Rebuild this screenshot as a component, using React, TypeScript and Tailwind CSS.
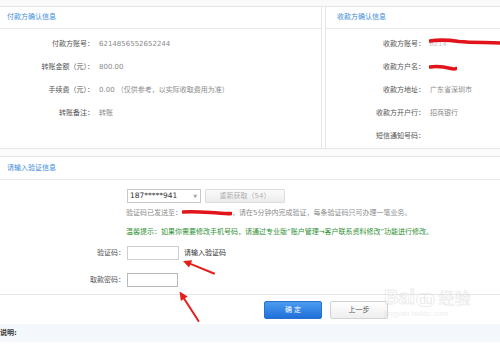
interface InfoRowProps {
  label: string;
  children?: React.ReactNode;
  labelClass: string;
}

const InfoRow = ({ label, children, labelClass }: InfoRowProps) => (
  <div className="flex h-[23px] items-center">
    <span className={`${labelClass} shrink-0 text-right text-[#555]`}>{label}</span>
    <span className="flex items-center text-[#8a8a8a]">{children}</span>
  </div>
);

const Scribble = ({ w, d }: { w: number; d: string }) => (
  <svg width={w} height="8" viewBox={`0 0 ${w} 8`} className="block">
    <path d={d} stroke="#e0141a" strokeWidth="3.6" fill="none" strokeLinecap="round" strokeLinejoin="round" />
  </svg>
);

const Arrows = () => (
  <svg className="pointer-events-none absolute left-0 top-0" width="500" height="344" viewBox="0 0 500 344">
    {/* arrow to 验证码 */}
    <path d="M214 273.5 L190.5 263.9" stroke="#e61e1a" strokeWidth="2" strokeLinecap="round" />
    <polygon points="183,261 192.2,260.2 189,267.6" fill="#e61e1a" />
    {/* arrow to 取款密码 */}
    <path d="M198.5 321 L184.2 298.8" stroke="#e61e1a" strokeWidth="2" strokeLinecap="round" />
    <polygon points="179.5,291.5 187.6,296.6 180.9,300.9" fill="#e61e1a" />
  </svg>
);

const Watermark = () => (
  <div className="pointer-events-none absolute left-[384px] top-[287px] flex flex-col opacity-45">
    <div className="flex items-end leading-none">
      <span className="font-['Liberation_Sans'] text-[20px] font-bold text-white [-webkit-text-stroke:0.8px_#cfcfcf]">Bai</span>
      <span className="ml-[1px] rounded-full border border-[#d4d4d4] px-[2px] font-['Liberation_Sans'] text-[12px] text-[#d0d0d0]">du</span>
      <span className="ml-[3px] text-[16px] text-white [-webkit-text-stroke:0.6px_#cfcfcf]">经验</span>
    </div>
    <span className="mt-[3px] font-['Liberation_Sans'] text-[8px] text-[#dadada]">jingyan.baidu.com</span>
  </div>
);

const App = () => {
  return (
    <div className="relative h-[344px] w-[500px] overflow-hidden bg-white font-['DejaVu_Sans','Noto_Sans_CJK_SC',sans-serif] text-[7px] leading-none">
      <div className="h-[6px] bg-[#fafafa]" />

      {/* confirm panels */}
      <div className="flex border-y border-[#e6e6e6]">
        <div className="w-[322px] border-r border-[#e6e6e6]">
          <div className="flex h-[22px] items-center border-b border-[#e8e8e8] pl-[7px] text-[#3e8ddb]">付款方确认信息</div>
          <div className="pt-[4px]">
            <InfoRow label="付款方账号：" labelClass="w-[94px]">
              <span className="ml-[5px]">6214856552652244</span>
            </InfoRow>
            <InfoRow label="转账金额（元）：" labelClass="w-[94px]">
              <span className="ml-[5px]">800.00</span>
            </InfoRow>
            <InfoRow label="手续费（元）：" labelClass="w-[94px]">
              <span className="ml-[5px]">0.00 （仅供参考，以实际收取费用为准）</span>
            </InfoRow>
            <InfoRow label="转账备注：" labelClass="w-[94px]">
              <span className="ml-[5px]">转账</span>
            </InfoRow>
          </div>
        </div>
        <div className="ml-[3px] flex-1 border-l border-[#e6e6e6]">
          <div className="flex h-[22px] items-center border-b border-[#e8e8e8] pl-[11px] text-[#3e8ddb]">收款方确认信息</div>
          <div className="pt-[4px]">
            <InfoRow label="收款方账号：" labelClass="w-[99px]">
              <span className="relative ml-[4px] flex items-center">
                <span className="text-[#c8c8c8]">6214</span>
                <span className="absolute left-0 top-[-3px]">
                  <Scribble w={72} d="M1 3 C10 1.5 20 2 30 3.5 C45 5 60 4 71 5" />
                </span>
              </span>
            </InfoRow>
            <InfoRow label="收款方户名：" labelClass="w-[99px]">
              <span className="ml-[4px]">
                <Scribble w={28} d="M1 3 C8 2 16 3 22 4.5 C24 5 26 5 27 4.5" />
              </span>
            </InfoRow>
            <InfoRow label="收款方地址：" labelClass="w-[99px]">
              <span className="ml-[5px]">广东省深圳市</span>
            </InfoRow>
            <InfoRow label="收款方开户行：" labelClass="w-[99px]">
              <span className="ml-[5px]">招商银行</span>
            </InfoRow>
            <InfoRow label="短信通知号码：" labelClass="w-[99px]" />
          </div>
        </div>
      </div>

      <div className="h-[7px] bg-[#fbfbfb]" />

      {/* verification */}
      <div className="border-y border-[#e6e6e6]">
        <div className="flex h-[23px] items-center border-b border-[#e8e8e8] pl-[7px] text-[#3e8ddb]">请输入验证信息</div>
        <div className="pb-[7px] pt-[9px]">
          <div className="flex h-[14px] pl-[127px]">
            <div className="flex w-[74px] items-center justify-between border border-[#c9c9c9] bg-white pl-[2px] pr-[3px]">
              <span className="text-[7.5px] text-[#333]">187*****941</span>
              <span className="text-[5px] text-[#a8a8a8]">▼</span>
            </div>
            <div className="ml-[4px] flex w-[80px] items-center justify-center rounded-[1px] border border-[#dcdcdc] bg-gradient-to-b from-[#fbfbfb] to-[#ececec] text-[#b0b0b0]">
              重新获取（54）
            </div>
          </div>
          <div className="mt-[3px] flex h-[14px] items-center pl-[126px] text-[#8c8c8c]">
            <span>验证码已发送至：</span>
            <Scribble w={50} d="M1 3 C12 2 26 3.5 36 4 C42 4.5 46 5 49 4.5" />
            <span>，请在5分钟内完成验证，每条验证码只可办理一笔业务。</span>
          </div>
          <div className="mt-[5px] flex h-[14px] items-center pl-[126px] text-[#2f9133]">
            温馨提示：如果你需要修改手机号码，请通过专业版“账户管理→客户联系资料修改”功能进行修改。
          </div>
          <div className="mt-[7px] flex h-[14px] items-center">
            <span className="w-[125px] text-right text-[#555]">验证码：</span>
            <div className="ml-[2px] h-[14px] w-[52px] border border-[#cfcfcf] bg-white" />
            <span className="ml-[5px] text-[#333]">请输入验证码</span>
          </div>
          <div className="mt-[13px] flex h-[14px] items-center">
            <span className="w-[125px] text-right text-[#555]">取款密码：</span>
            <div className="ml-[2px] h-[14px] w-[51px] border border-[#b9b9b9] bg-white" />
          </div>
        </div>
      </div>

      {/* actions */}
      <div className="flex gap-[8px] pl-[264px] pt-[6px]">
        <button className="flex h-[18px] w-[58px] items-center justify-center rounded-[2px] border border-[#2b72cf] bg-gradient-to-b from-[#4b9cf0] to-[#1f6fd9] text-white">
          确 定
        </button>
        <button className="flex h-[18px] w-[58px] items-center justify-center rounded-[2px] border border-[#d2d2d2] bg-gradient-to-b from-white to-[#eeeeee] text-[#555]">
          上一步
        </button>
      </div>

      <div className="mt-[5px] flex h-[18px] items-center bg-[#f4f7fb]">
        <span className="font-bold text-[#333]">说明:</span>
      </div>

      <Watermark />
      <Arrows />
    </div>
  );
};

export default App;
